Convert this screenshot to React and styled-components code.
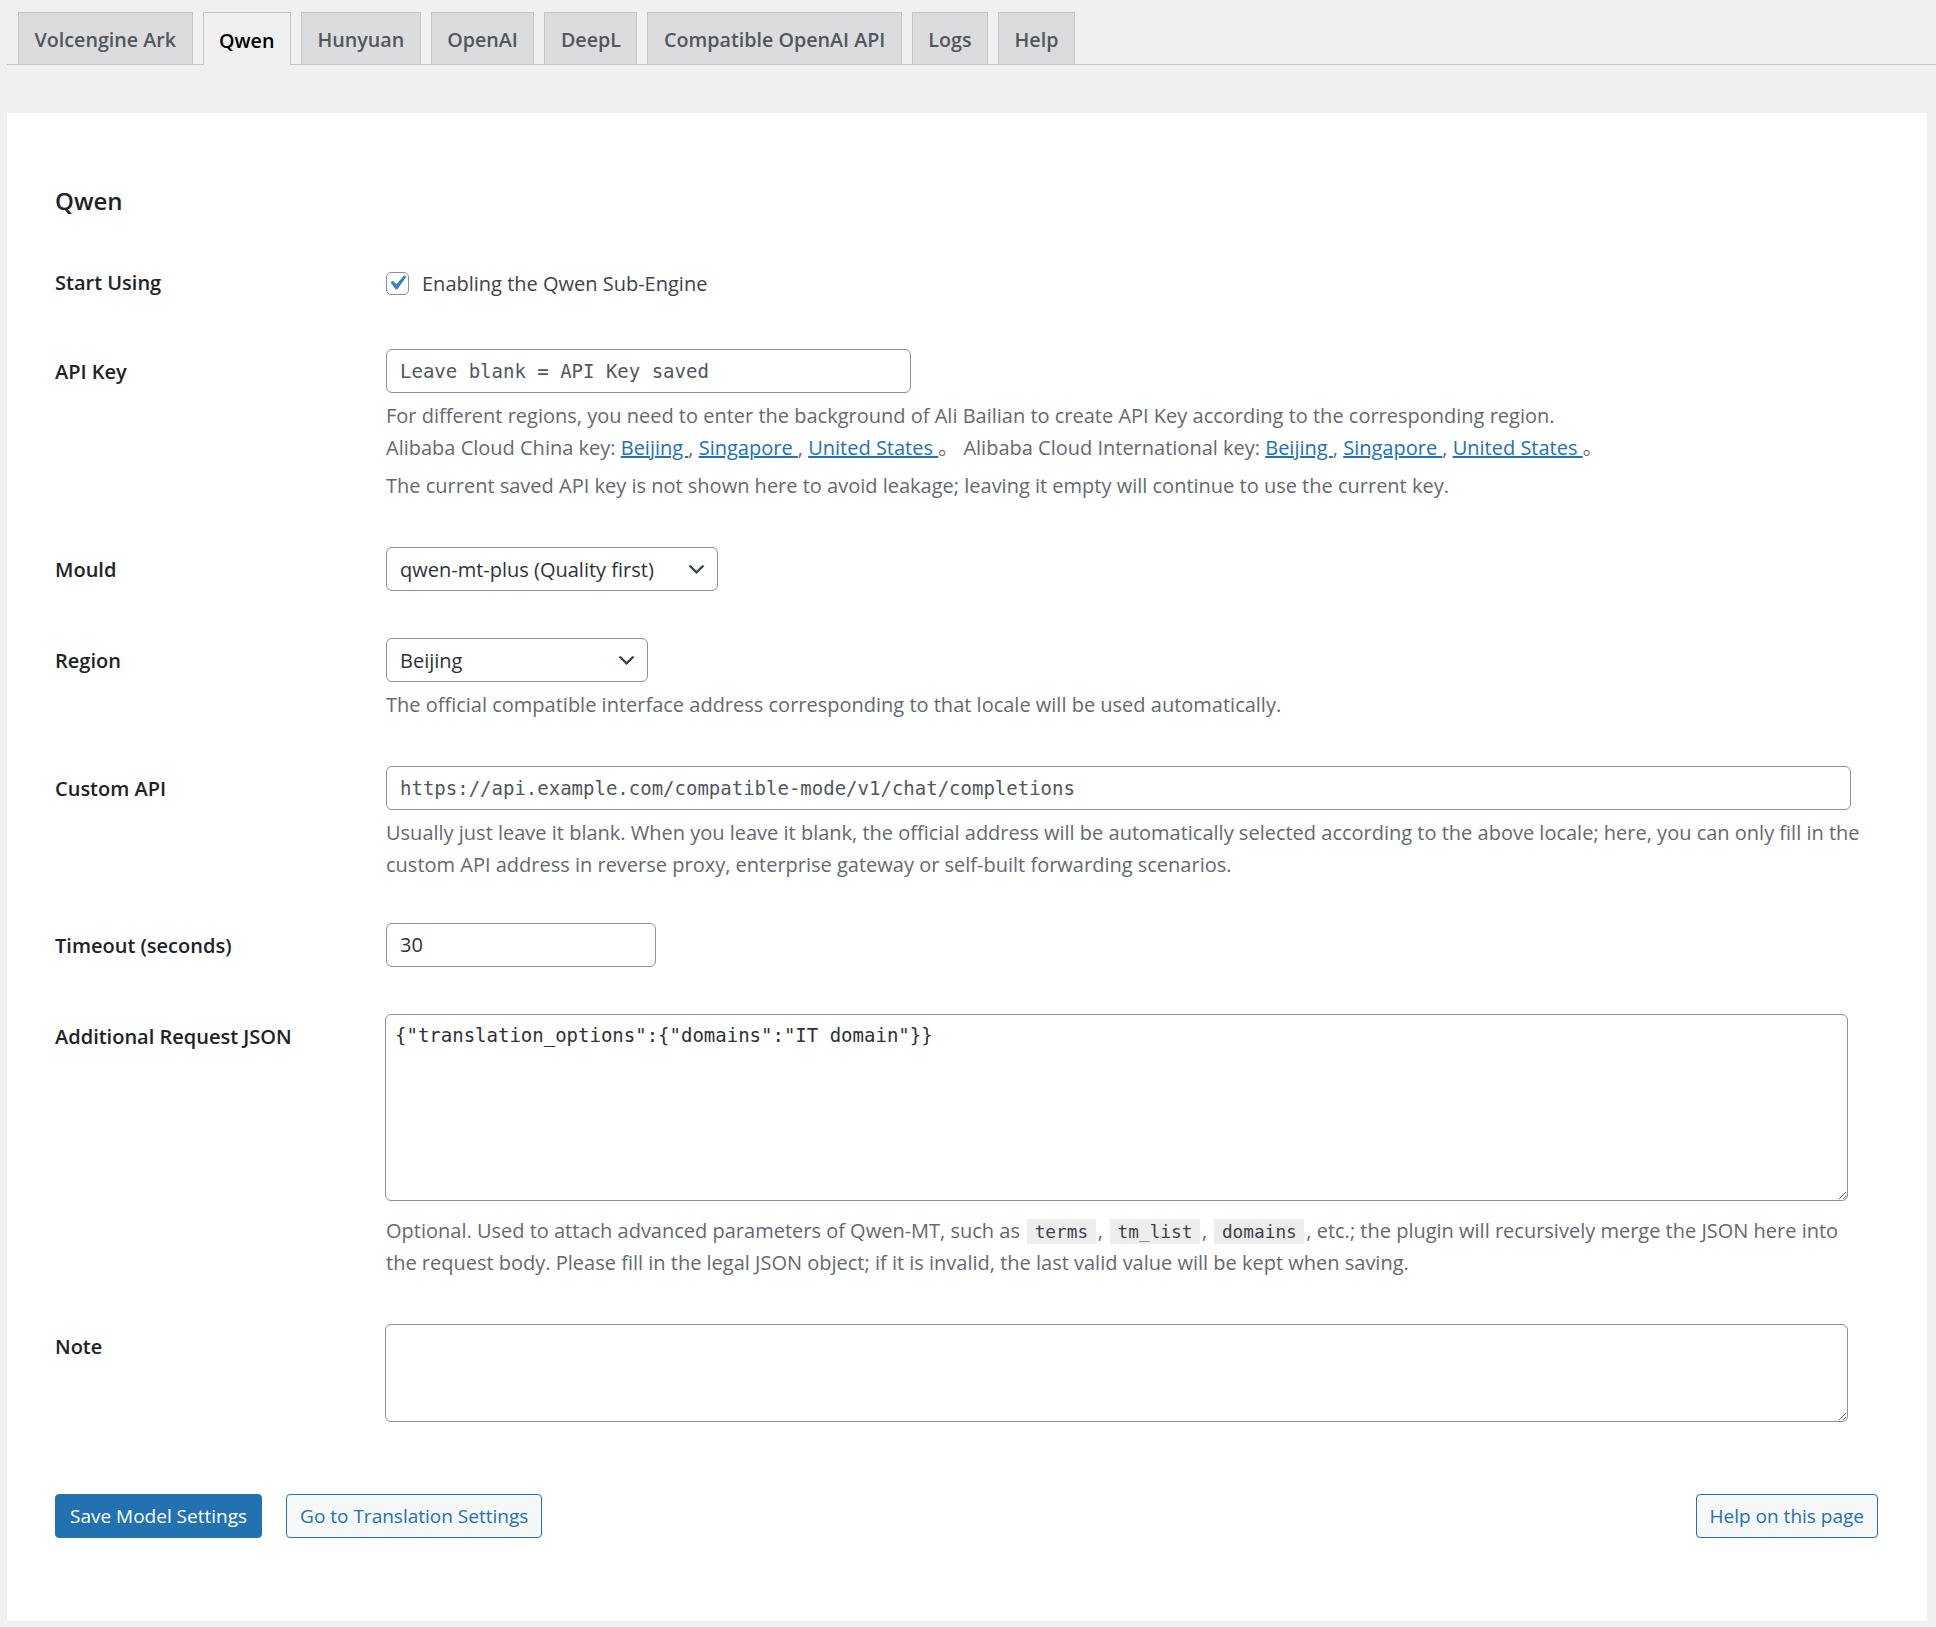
import React from "react";
import styled, { createGlobalStyle } from "styled-components";

const GlobalStyle = createGlobalStyle`
  * { box-sizing: border-box; }
  html, body {
    margin: 0;
    padding: 0;
    background: #f0f0f1;
  }
  body {
    font-family: "Open Sans", "Noto Sans", "Noto Sans CJK SC", sans-serif;
    font-size: 20px;
    color: #3c434a;
  }
`;

const tabs = ["Volcengine Ark", "Qwen", "Hunyuan", "OpenAI", "DeepL", "Compatible OpenAI API", "Logs", "Help"];

const Page = styled.div`
  padding: 12px 0 6px 7px;
`;

const TabBar = styled.nav`
  display: flex;
  align-items: flex-end;
  gap: 10px;
  padding-left: 11px;
  border-bottom: 1px solid #c3c4c7;
`;

const Tab = styled.a`
  display: flex;
  align-items: center;
  height: ${(p) => (p.$active ? "53px" : "52px")};
  margin-bottom: ${(p) => (p.$active ? "-1px" : "0")};
  padding: 2px 15.5px 0;
  border: 1px solid #c3c4c7;
  border-bottom: none;
  background: ${(p) => (p.$active ? "#f0f0f1" : "#dcdcde")};
  color: ${(p) => (p.$active ? "#000" : "#50575e")};
  font-size: 19.7px;
  font-weight: 600;
  text-decoration: none;
  white-space: nowrap;
`;

const Panel = styled.section`
  margin: 48px 9px 0 0;
  padding: 72px 49px 83px 48px;
  background: #fff;
`;

const Heading = styled.h2`
  margin: 0 0 22.5px;
  font-size: 24px;
  line-height: 32px;
  font-weight: 600;
  color: #1d2327;
`;

const Row = styled.div`
  display: grid;
  grid-template-columns: 331px 1fr;
  padding: 22.5px 0 ${(p) => p.$bottom || "22.5px"};
`;

const Label = styled.div`
  font-weight: 600;
  color: #1d2327;
  line-height: ${(p) => p.$line || "46px"};
`;

const Field = styled.div`
  padding-right: 14px;
`;

const CheckLine = styled.label`
  display: flex;
  align-items: center;
  gap: 13px;
  height: 42px;
  color: #3c434a;
`;

const CheckBox = styled.span`
  display: flex;
  align-items: center;
  justify-content: center;
  width: 23px;
  height: 23px;
  border: 1px solid #8c8f94;
  border-radius: 5px;
  background: #fff;

  svg {
    flex: none;
    margin: -4px -3px -4px -5px;
  }
`;

const TextInput = styled.input`
  display: block;
  width: ${(p) => p.$width};
  height: 44px;
  padding: 0 13px;
  border: 1px solid #8c8f94;
  border-radius: 6px;
  background: #fff;
  color: #2c3338;
  font-family: ${(p) => (p.$code ? '"DejaVu Sans Mono", monospace' : '"Open Sans", sans-serif')};
  font-size: ${(p) => (p.$code ? "19px" : "20px")};
  outline: none;

  &::placeholder {
    color: #50575e;
    opacity: 1;
  }
`;

const SelectBox = styled.div`
  display: flex;
  align-items: center;
  justify-content: space-between;
  width: ${(p) => p.$width};
  height: 44px;
  padding: 0 9px 0 13px;
  border: 1px solid #8c8f94;
  border-radius: 6px;
  background: #fff;
  color: #2c3338;
`;

const TextArea = styled.textarea`
  display: block;
  width: 1463px;
  height: ${(p) => p.$height};
  margin-left: -1px;
  padding: 6px 9px;
  border: 1px solid #8c8f94;
  border-radius: 6px;
  background: #fff;
  color: #2c3338;
  font-family: "DejaVu Sans Mono", monospace;
  font-size: 19px;
  line-height: 28px;
  outline: none;
`;

const Description = styled.p`
  margin: ${(p) => p.$top || "7px"} 0 0;
  line-height: 32px;
  color: #646970;
`;

const Link = styled.a`
  color: #2271b1;
  text-decoration: underline;
`;

const Code = styled.code`
  display: inline-block;
  margin: 0 2px;
  padding: 0 7.5px;
  line-height: 25px;
  background: #ededed;
  color: #3c434a;
  font-family: "DejaVu Sans Mono", monospace;
  font-size: 17.8px;
`;

const ButtonBar = styled.div`
  display: flex;
  align-items: center;
  gap: 24px;
  margin-top: 49.5px;
`;

const Button = styled.a`
  display: inline-flex;
  align-items: center;
  height: 44px;
  padding: 0 ${(p) => (p.$primary ? "14px" : "13px")};
  border: 1px solid #2271b1;
  border-radius: 4px;
  background: ${(p) => (p.$primary ? "#2271b1" : "#f6f7f7")};
  color: ${(p) => (p.$primary ? "#fff" : "#2271b1")};
  font-size: 19px;
  text-decoration: none;
  white-space: nowrap;

  &:last-child {
    margin-left: auto;
  }
`;

const Chevron = () => (
  <svg width="23" height="23" viewBox="0 0 20 20" aria-hidden="true">
    <path d="M5 6l5 5 5-5 2 1-7 7-7-7 2-1z" fill="#3c434a" />
  </svg>
);

const Tick = () => (
  <svg width="30" height="30" viewBox="0 0 20 20" aria-hidden="true">
    <path d="M14.83 4.89l1.34.94-5.81 8.38H9.02L5.78 9.67l1.34-1.25 2.57 2.4z" fill="#3582c4" />
  </svg>
);

const RegionLinks = () => (
  <>
    <Link href="#">Beijing </Link>, <Link href="#">Singapore </Link>, <Link href="#">United States </Link>。
  </>
);

export default function App() {
  return (
    <Page>
      <GlobalStyle />
      <TabBar>
        {tabs.map((t) => (
          <Tab key={t} href="#" $active={t === "Qwen"}>
            {t}
          </Tab>
        ))}
      </TabBar>

      <Panel>
        <Heading>Qwen</Heading>

        <Row>
          <Label $line="42px">Start Using</Label>
          <Field>
            <CheckLine>
              <CheckBox>
                <Tick />
              </CheckBox>
              Enabling the Qwen Sub-Engine
            </CheckLine>
          </Field>
        </Row>

        <Row>
          <Label>API Key</Label>
          <Field>
            <TextInput $code $width="525px" placeholder="Leave blank = API Key saved" />
            <Description>
              For different regions, you need to enter the background of Ali Bailian to create API Key according to the corresponding region.
              <br />
              Alibaba Cloud China key: <RegionLinks /> Alibaba Cloud International key: <RegionLinks />
            </Description>
            <Description $top="6px">
              The current saved API key is not shown here to avoid leakage; leaving it empty will continue to use the current key.
            </Description>
          </Field>
        </Row>

        <Row>
          <Label>Mould</Label>
          <Field>
            <SelectBox $width="332px">
              qwen-mt-plus (Quality first)
              <Chevron />
            </SelectBox>
          </Field>
        </Row>

        <Row>
          <Label>Region</Label>
          <Field>
            <SelectBox $width="262px">
              Beijing
              <Chevron />
            </SelectBox>
            <Description>The official compatible interface address corresponding to that locale will be used automatically.</Description>
          </Field>
        </Row>

        <Row $bottom="19px">
          <Label>Custom API</Label>
          <Field>
            <TextInput $code $width="1465px" placeholder="https://api.example.com/compatible-mode/v1/chat/completions" />
            <Description>
              Usually just leave it blank. When you leave it blank, the official address will be automatically selected according to the above locale; here, you can only fill in the custom API address in reverse proxy, enterprise gateway or self-built forwarding scenarios.
            </Description>
          </Field>
        </Row>

        <Row>
          <Label>Timeout (seconds)</Label>
          <Field>
            <TextInput $width="270px" defaultValue="30" />
          </Field>
        </Row>

        <Row>
          <Label>Additional Request JSON</Label>
          <Field>
            <TextArea $height="187px" defaultValue={'{"translation_options":{"domains":"IT domain"}}'} />
            <Description $top="14px">
              Optional. Used to attach advanced parameters of Qwen-MT, such as <Code>terms</Code>, <Code>tm_list</Code>,{" "}
              <Code>domains</Code>, etc.; the plugin will recursively merge the JSON here into the request body. Please fill in the legal JSON object; if it is invalid, the last valid value will be kept when saving.
            </Description>
          </Field>
        </Row>

        <Row>
          <Label>Note</Label>
          <Field>
            <TextArea $height="98px" />
          </Field>
        </Row>

        <ButtonBar>
          <Button $primary href="#">Save Model Settings</Button>
          <Button href="#">Go to Translation Settings</Button>
          <Button href="#">Help on this page</Button>
        </ButtonBar>
      </Panel>
    </Page>
  );
}
